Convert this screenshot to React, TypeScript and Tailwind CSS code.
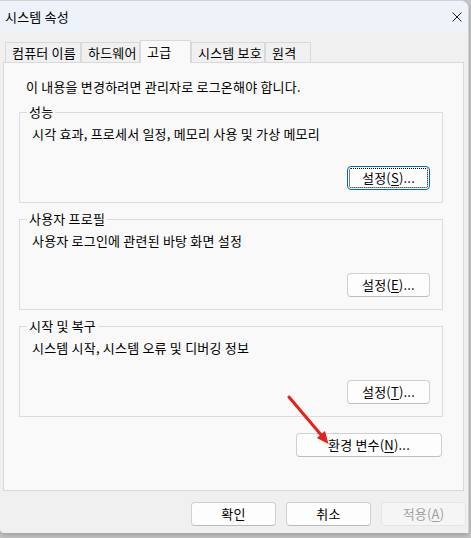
import type { ReactNode } from 'react';

const tabs = [
  { label: '컴퓨터 이름', w: 'w-[76px]' },
  { label: '하드웨어', w: 'w-[59px]' },
  { label: '고급', w: 'w-[51px]', active: true },
  { label: '시스템 보호', w: 'w-[74px]' },
  { label: '원격', w: 'w-[46px]' },
];

function Btn({
  children,
  className = '',
  focused = false,
  disabled = false,
}: {
  children: ReactNode;
  className?: string;
  focused?: boolean;
  disabled?: boolean;
}) {
  let look = 'border-[#d0d0d0] border-b-[#bdbdbd] bg-[#fdfdfd] text-black';
  if (focused) look = 'border-[#0067c0] bg-[#fdfdfd] text-black outline-1 outline-dotted outline-black -outline-offset-3';
  if (disabled) look = 'border-[#e5e5e5] bg-[#f5f5f5] text-[#a0a0a0]';
  return (
    <button
      type="button"
      className={`h-[24px] rounded-[4px] border text-[13px] tracking-[0.2px] leading-[16px] flex items-center justify-center ${look} ${className}`}
    >
      {children}
    </button>
  );
}

function Group({ title, text, button }: { title: string; text: string; button: ReactNode }) {
  return (
    <fieldset className="ml-[15px] w-[424px] border border-[#dcdcdc] px-[7px] pb-[12px]">
      <legend className="px-[2px] text-[13px] leading-[16px]">{title}</legend>
      <div className="pl-[5px] pt-[6px] text-[13px] leading-[16px]">{text}</div>
      <div className="mt-[24px] flex justify-end pr-[5px]">{button}</div>
    </fieldset>
  );
}

export default function App() {
  return (
    <div className="relative w-[471px] h-[538px] overflow-hidden bg-[#c9c9c9] font-['Noto_Sans_CJK_KR',sans-serif] text-[13px] tracking-[0.2px] text-black">
      <div className="w-[469px] h-[533px] bg-[#f0f0f0] rounded-tr-[8px] rounded-bl-[4px] border-t border-r border-[#d2d2d2] shadow-[0_2px_6px_rgba(0,0,0,0.25)] flex flex-col">
        {/* title bar */}
        <div className="h-[31px] bg-[#eef2f9] rounded-tr-[8px] flex items-center justify-between pl-[5px] pr-[5px]">
          <span className="text-[13px] leading-[16px]">시스템 속성</span>
          <svg width="10" height="10" viewBox="0 0 10 10" className="mr-[1px]">
            <path d="M0.5 0.5 L9.5 9.5 M9.5 0.5 L0.5 9.5" stroke="#1a1a1a" strokeWidth="1" />
          </svg>
        </div>

        {/* tabs */}
        <div className="mt-[8px] ml-[5px] flex items-end">
          {tabs.map((t) =>
            t.active ? (
              <div
                key={t.label}
                className={`${t.w} h-[23px] -mb-px relative z-10 bg-[#f9f9f9] border-t border-l border-r border-[#d9d9d9] pl-[6px] text-[13px] leading-[16px] flex items-center`}
              >
                {t.label}
              </div>
            ) : (
              <div
                key={t.label}
                className={`${t.w} h-[20px] bg-[#f0f0f0] border-t border-l border-r border-[#d9d9d9] pl-[6px] text-[13px] leading-[16px] flex items-center whitespace-nowrap`}
              >
                {t.label}
              </div>
            )
          )}
        </div>

        {/* tab panel */}
        <div className="ml-[3px] w-[461px] h-[429px] bg-[#f9f9f9] border border-[#d9d9d9] flex flex-col">
          <p className="pl-[22px] pt-[16px] text-[13px] leading-[16px]">이 내용을 변경하려면 관리자로 로그온해야 합니다.</p>

          <div className="mt-[9px] flex flex-col gap-[8px]">
            <Group
              title="성능"
              text="시각 효과, 프로세서 일정, 메모리 사용 및 가상 메모리"
              button={
                <Btn focused className="w-[83px]">
                  설정(<span className="underline underline-offset-2">S</span>)...
                </Btn>
              }
            />
            <Group
              title="사용자 프로필"
              text="사용자 로그인에 관련된 바탕 화면 설정"
              button={
                <Btn className="w-[83px]">
                  설정(<span className="underline underline-offset-2">E</span>)...
                </Btn>
              }
            />
            <Group
              title="시작 및 복구"
              text="시스템 시작, 시스템 오류 및 디버깅 정보"
              button={
                <Btn className="w-[83px]">
                  설정(<span className="underline underline-offset-2">T</span>)...
                </Btn>
              }
            />
          </div>

          <div className="mt-[16px] flex justify-end pr-[21px]">
            <Btn className="w-[146px]">
              환경 변수(<span className="underline underline-offset-2">N</span>)...
            </Btn>
          </div>
        </div>

        {/* dialog buttons */}
        <div className="mt-[11px] flex justify-end gap-[10px] pr-[2px]">
          <Btn className="w-[85px]">확인</Btn>
          <Btn className="w-[85px]">취소</Btn>
          <Btn disabled className="w-[85px]">
            적용(<span className="underline underline-offset-2">A</span>)
          </Btn>
        </div>
      </div>

      {/* annotation arrow */}
      <svg className="absolute left-0 top-0 pointer-events-none" width="471" height="538">
        <line x1="289" y1="397" x2="322" y2="436" stroke="#e8211b" strokeWidth="3" strokeLinecap="round" />
        <polygon points="328.5,444 316.8,438 325,431" fill="#e8211b" />
      </svg>
    </div>
  );
}
